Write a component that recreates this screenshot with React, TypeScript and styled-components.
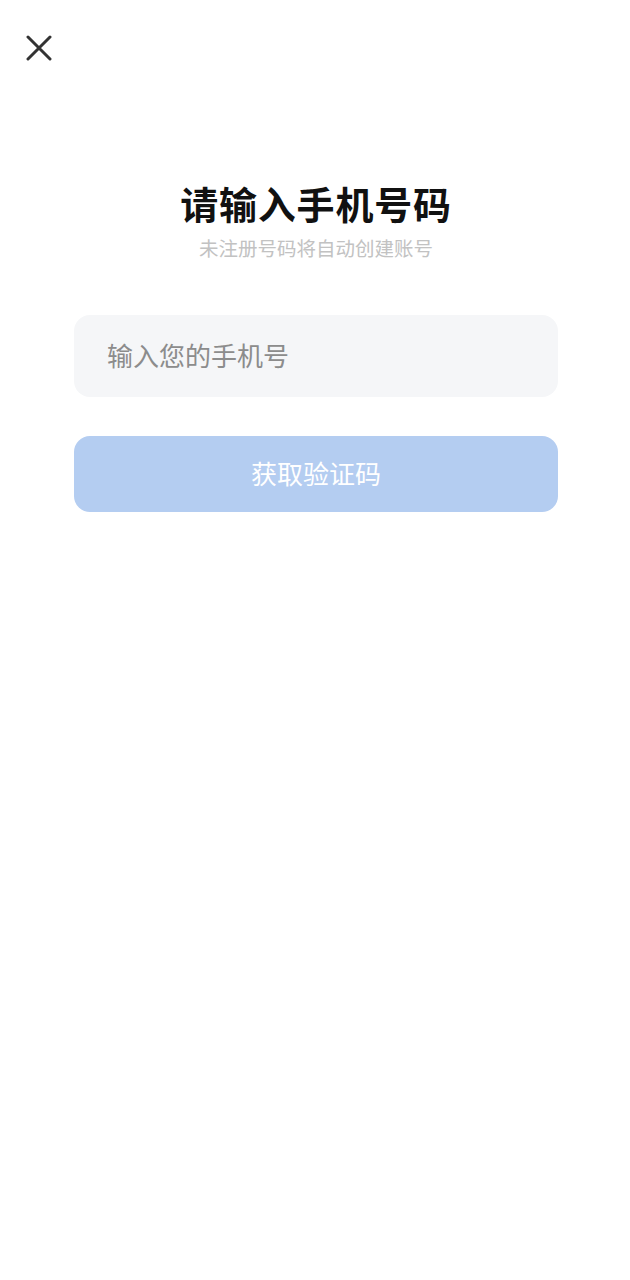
import styled, { createGlobalStyle } from 'styled-components';

const GlobalStyle = createGlobalStyle`
  html, body {
    margin: 0;
    padding: 0;
    background: #ffffff;
  }
  body {
    font-family: "Noto Sans CJK SC", "Noto Sans", sans-serif;
  }
  * {
    box-sizing: border-box;
  }
`;

const Page = styled.div`
  min-height: 1280px;
  background: #ffffff;
  display: flex;
  flex-direction: column;
`;

const TopBar = styled.div`
  display: flex;
  align-items: center;
  padding: 35px 0 0 26px;
  height: 61px;
`;

const CloseButton = styled.button`
  width: 26px;
  height: 26px;
  padding: 0;
  border: none;
  background: transparent;
  display: flex;
  cursor: pointer;
`;

const Content = styled.main`
  display: flex;
  flex-direction: column;
  align-items: center;
  padding: 119px 72px 0 74px;
`;

const Title = styled.h1`
  margin: 0;
  font-size: 38px;
  line-height: 46px;
  font-weight: 700;
  color: #111111;
  letter-spacing: 0.8px;
`;

const Subtitle = styled.p`
  margin: 10px 0 0;
  font-size: 19.5px;
  line-height: 24px;
  color: #c2c2c2;
`;

const PhoneInput = styled.input`
  margin-top: 55px;
  width: 484px;
  height: 82px;
  border: none;
  outline: none;
  border-radius: 16px;
  background: #f5f6f8;
  padding: 0 33px 4px;
  font-family: inherit;
  font-size: 26px;
  color: #333333;

  &::placeholder {
    color: #8c8c8c;
  }
`;

const SubmitButton = styled.button<{ $enabled: boolean }>`
  margin-top: 39px;
  width: 484px;
  height: 76px;
  border: none;
  border-radius: 16px;
  background: ${(p) => (p.$enabled ? '#3d7de6' : '#b4cdf1')};
  color: #ffffff;
  font-family: inherit;
  font-size: 26px;
  padding: 0 0 4px;
  cursor: ${(p) => (p.$enabled ? 'pointer' : 'default')};
`;

function CloseIcon() {
  return (
    <svg width="26" height="26" viewBox="0 0 26 26" fill="none">
      <path
        d="M2 2 L24 24 M24 2 L2 24"
        stroke="#333333"
        strokeWidth="3"
        strokeLinecap="round"
      />
    </svg>
  );
}

export default function App() {
  return (
    <>
      <GlobalStyle />
      <Page>
        <TopBar>
          <CloseButton aria-label="关闭">
            <CloseIcon />
          </CloseButton>
        </TopBar>
        <Content>
          <Title>请输入手机号码</Title>
          <Subtitle>未注册号码将自动创建账号</Subtitle>
          <PhoneInput type="tel" placeholder="输入您的手机号" />
          <SubmitButton $enabled={false}>获取验证码</SubmitButton>
        </Content>
      </Page>
    </>
  );
}
